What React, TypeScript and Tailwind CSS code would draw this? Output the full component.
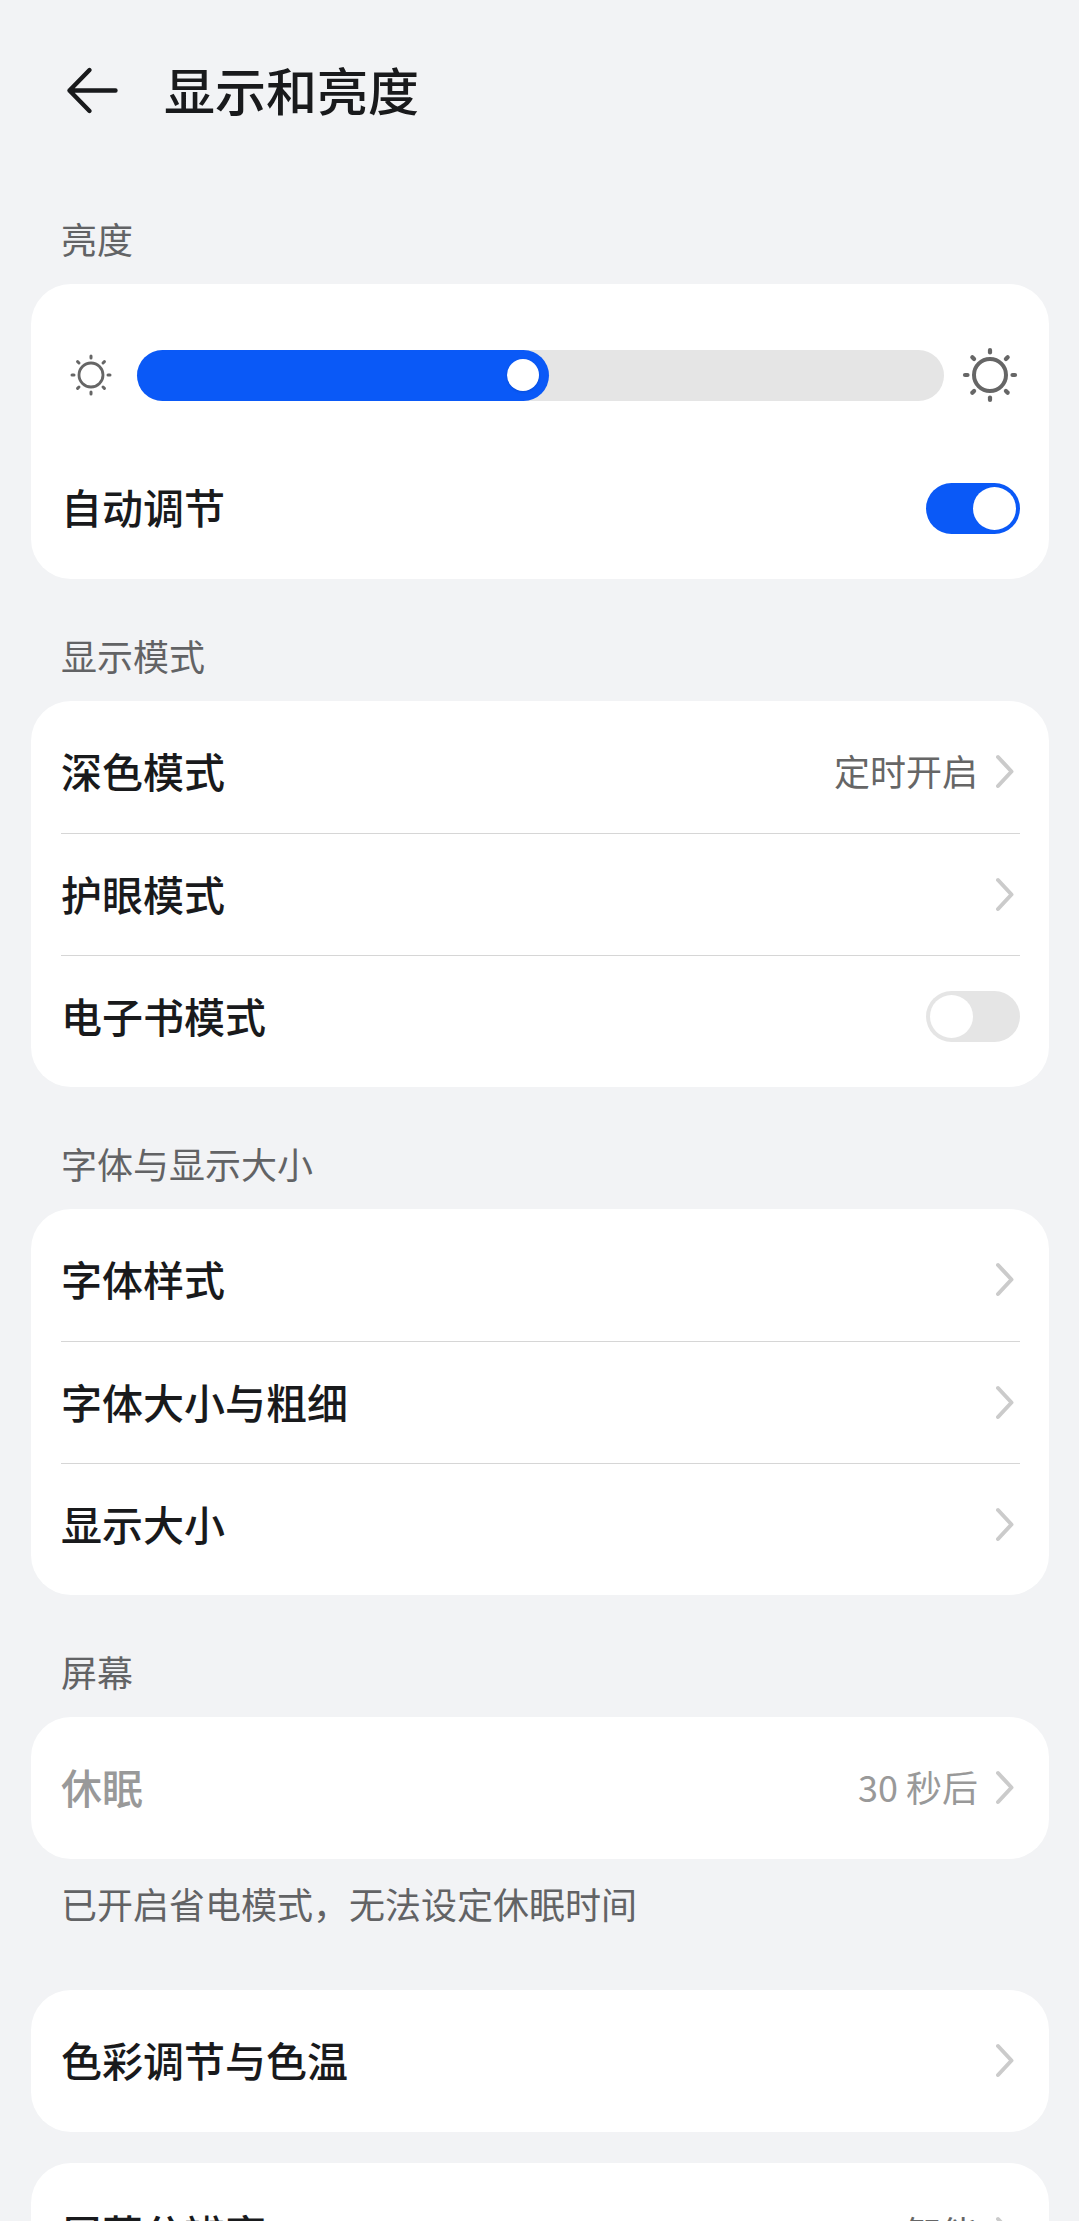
import React, { useState } from 'react';

const BackArrow = () => (
    <svg width="56" height="56" viewBox="0 0 56 56" fill="none" stroke="#191a1c" strokeWidth="4.4" strokeLinecap="round" strokeLinejoin="round" aria-hidden="true">
        <path d="M5.500 27.500H51.500M25.500 7L5.500 27.500L25.500 48" />
    </svg>
)

const Chevron = () => (
    <svg className="shrink-0" width="24" height="40" viewBox="0 0 24 40" fill="none" stroke="#cbcbcb" strokeWidth="4" strokeLinecap="round" strokeLinejoin="round" aria-hidden="true">
        <path d="M2 5L15.500 19.500L2 34" />
    </svg>
)

const angles = [0, 45, 90, 135, 180, 225, 270, 315]

const Sun = ({radius, from, to, stroke, ray}:{radius:number, from:number, to:number, stroke:number, ray:number}) => (
    <svg className="shrink-0" width="60" height="60" viewBox="-30 -30 60 60" fill="none" stroke="#666666" strokeLinecap="round" aria-hidden="true">
        <circle r={radius} strokeWidth={stroke} />
        {angles.map((angle) => (
            <line key={angle} x1={from} x2={to} y1="0" y2="0" strokeWidth={ray} transform={`rotate(${angle})`} />
        ))}
    </svg>
)

const Card = ({children}:{children:React.ReactNode}) => (
    <div className="rounded-[40px] bg-white py-2.5 pr-[29px] pl-[30px]">{children}</div>
)

const Section = ({title, children}:{title:string, children:React.ReactNode}) => (
    <section>
        <h2 className="px-[30px] pt-[52px] pb-[22px] text-[36px] leading-[48px] text-[#626365]">{title}</h2>
        {children}
    </section>
)

const LinkRow = ({label, value, disabled, divider}:{label:string, value?:string, disabled?:boolean, divider?:boolean}) => (
    <button
        type="button"
        disabled={disabled}
        className={`flex h-[122px] w-full items-center text-left ${divider ? 'border-t border-[#d6d6d6]' : ''} ${disabled ? 'text-[#999999]' : 'text-[#191a1c]'}`}
    >
        <span className="flex-1 pb-1 text-[41px] leading-[56px] font-medium">{label}</span>
        {value && <span className={`mr-[18px] pb-1 text-[36px] leading-[48px] ${disabled ? 'text-[#999999]' : 'text-[#666666]'}`}>{value}</span>}
        <Chevron />
    </button>
)

const SwitchRow = ({id, label, on, divider}:{id:string, label:string, on:boolean, divider?:boolean}) => {
    const [checked, setChecked] = useState(on)

    return (
        <div className={`flex h-[122px] items-center text-[#191a1c] ${divider ? 'border-t border-[#d6d6d6]' : ''}`}>
            <label htmlFor={id} className="flex-1 pb-1 text-[41px] leading-[56px] font-medium">{label}</label>
            <input
                id={id}
                type="checkbox"
                role="switch"
                checked={checked}
                onChange={(e) => setChecked(e.target.checked)}
                className="h-[51px] w-[94px] shrink-0 appearance-none rounded-full bg-[#e5e5e5] p-1 before:block before:size-[43px] before:rounded-full before:bg-white checked:bg-[#0a59f7] checked:before:translate-x-[43px]"
            />
        </div>
    )
}

const BrightnessSlider = () => {
    const [value, setValue] = useState(51)

    return (
        <div className="flex items-center gap-4 pt-[51px] pb-[42px]">
            <Sun radius={12} from={17} to={19} stroke={2.800} ray={3} />
            <div className="relative h-[51px] flex-1 rounded-full bg-[#e5e5e5]">
                <div className="flex h-full min-w-[51px] items-center justify-end rounded-full bg-[#0a59f7] pr-2.5" style={{ width: `${value}%` }}>
                    <span className="size-8 rounded-full bg-white shadow-sm" />
                </div>
                <input
                    type="range"
                    aria-label="亮度"
                    min="0"
                    max="100"
                    value={value}
                    onChange={(e) => setValue(Number(e.target.value))}
                    className="absolute inset-0 h-full w-full cursor-pointer opacity-0"
                />
            </div>
            <Sun radius={16} from={22.500} to={25} stroke={4} ray={4.200} />
        </div>
    )
}

const App = () => {
    return (
        <main lang="zh-CN" className="h-screen overflow-y-auto bg-[#f2f3f5] pr-[30px] pb-8 pl-[31px] font-['Noto_Sans_CJK_SC',sans-serif] [scrollbar-width:none]">
            <header className="flex h-[162px] items-center gap-11 pt-5 pl-[33px]">
                <button type="button" aria-label="返回">
                    <BackArrow />
                </button>
                <h1 className="pb-1 text-[51px] leading-[64px] font-medium text-[#191a1c]">显示和亮度</h1>
            </header>

            <Section title="亮度">
                <Card>
                    <BrightnessSlider />
                    <SwitchRow id="auto" label="自动调节" on={true} />
                </Card>
            </Section>

            <Section title="显示模式">
                <Card>
                    <LinkRow label="深色模式" value="定时开启" />
                    <LinkRow label="护眼模式" divider />
                    <SwitchRow id="ebook" label="电子书模式" on={false} divider />
                </Card>
            </Section>

            <Section title="字体与显示大小">
                <Card>
                    <LinkRow label="字体样式" />
                    <LinkRow label="字体大小与粗细" divider />
                    <LinkRow label="显示大小" divider />
                </Card>
            </Section>

            <Section title="屏幕">
                <Card>
                    <LinkRow label="休眠" value="30 秒后" disabled />
                </Card>
                <p className="px-[30px] pt-5 pb-[63px] text-[36px] leading-[48px] text-[#626365]">已开启省电模式，无法设定休眠时间</p>
            </Section>

            <div className="flex flex-col gap-[31px]">
                <Card>
                    <LinkRow label="色彩调节与色温" />
                </Card>
                <Card>
                    <LinkRow label="屏幕分辨率" value="智能" />
                </Card>
            </div>
        </main>
    )
}

export default App;
